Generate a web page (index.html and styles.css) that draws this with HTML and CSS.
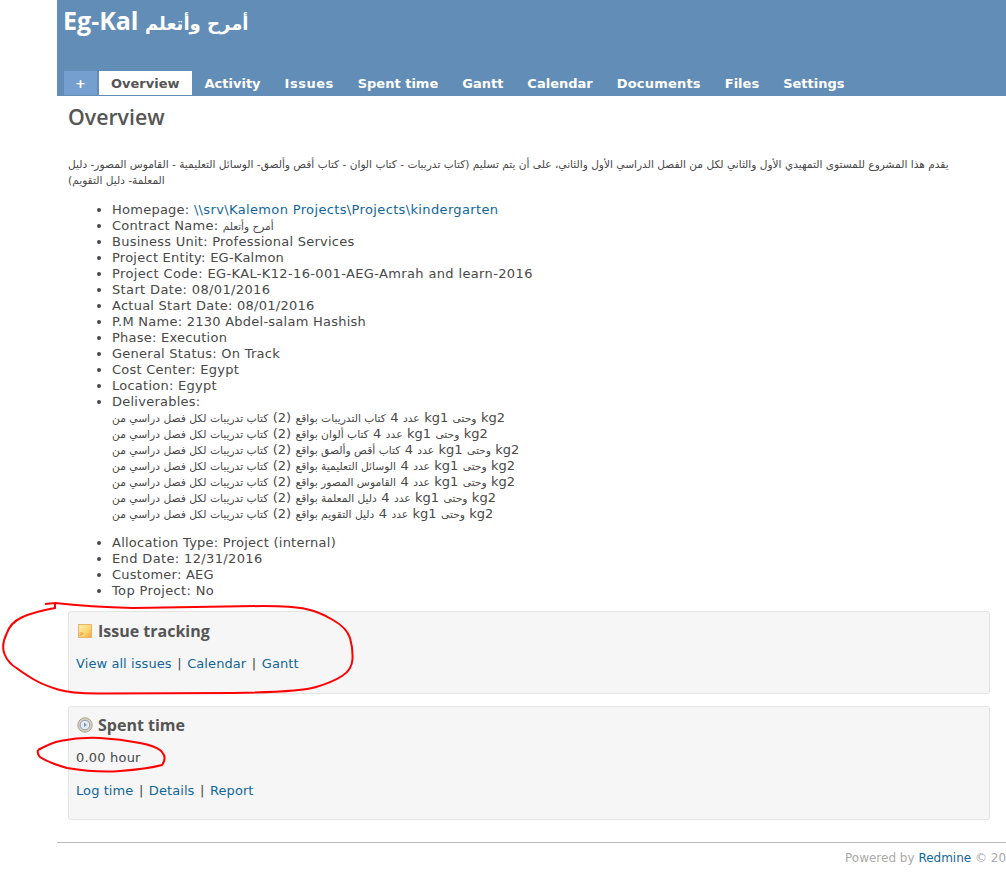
FILE: index.html
```html
<!DOCTYPE html>
<html lang="en">
<head>
<meta charset="utf-8">
<title>Overview - Eg-Kal</title>
<link rel="stylesheet" href="styles.css">
</head>
<body>
<div class="wrapper">
  <header class="header">
    <h1 class="site-title">Eg-Kal <span class="ar-title">أمرح وأتعلم</span></h1>
    <nav class="tabs">
      <a class="tab tab-new" href="#">+</a>
      <a class="tab tab-selected" href="#">Overview</a>
      <a class="tab" href="#">Activity</a>
      <a class="tab tab-issues" href="#">Issues</a>
      <a class="tab" href="#">Spent time</a>
      <a class="tab" href="#">Gantt</a>
      <a class="tab" href="#">Calendar</a>
      <a class="tab tab-docs" href="#">Documents</a>
      <a class="tab" href="#">Files</a>
      <a class="tab" href="#">Settings</a>
    </nav>
  </header>
  <main class="content">
    <h2 class="page-title">Overview</h2>
    <p class="description" dir="rtl">يقدم هذا المشروع للمستوى التمهيدي الأول والثاني لكل من الفصل الدراسي الأول والثاني، على أن يتم تسليم (كتاب تدريبات - كتاب الوان - كتاب أقص وألصق- الوسائل التعليمية - القاموس المصور- دليل المعلمة- دليل التقويم)</p>
    <ul class="fields">
      <li>Homepage: <a class="wide" href="#">\\srv\Kalemon Projects\Projects\kindergarten</a></li>
      <li>Contract Name: <span class="ar">أمرح وأتعلم</span></li>
      <li>Business Unit: Professional Services</li>
      <li>Project Entity: EG-Kalmon</li>
      <li class="wide">Project Code: EG-KAL-K12-16-001-AEG-Amrah and learn-2016</li>
      <li class="wide">Start Date: 08/01/2016</li>
      <li>Actual Start Date: 08/01/2016</li>
      <li>P.M Name: 2130 Abdel-salam Hashish</li>
      <li>Phase: Execution</li>
      <li>General Status: On Track</li>
      <li>Cost Center: Egypt</li>
      <li>Location: Egypt</li>
      <li>Deliverables:
        <div class="deliverables">
          <div class="deliverable" dir="rtl"><span class="lat">kg2</span> وحتى <span class="lat">kg1</span> عدد <span class="lat">4</span> كتاب التدريبات بواقع <span class="lat">(2)</span> كتاب تدريبات لكل فصل دراسي من</div>
          <div class="deliverable" dir="rtl"><span class="lat">kg2</span> وحتى <span class="lat">kg1</span> عدد <span class="lat">4</span> كتاب ألوان بواقع <span class="lat">(2)</span> كتاب تدريبات لكل فصل دراسي من</div>
          <div class="deliverable" dir="rtl"><span class="lat">kg2</span> وحتى <span class="lat">kg1</span> عدد <span class="lat">4</span> كتاب أقص وألصق بواقع <span class="lat">(2)</span> كتاب تدريبات لكل فصل دراسي من</div>
          <div class="deliverable" dir="rtl"><span class="lat">kg2</span> وحتى <span class="lat">kg1</span> عدد <span class="lat">4</span> الوسائل التعليمية بواقع <span class="lat">(2)</span> كتاب تدريبات لكل فصل دراسي من</div>
          <div class="deliverable" dir="rtl"><span class="lat">kg2</span> وحتى <span class="lat">kg1</span> عدد <span class="lat">4</span> القاموس المصور بواقع <span class="lat">(2)</span> كتاب تدريبات لكل فصل دراسي من</div>
          <div class="deliverable" dir="rtl"><span class="lat">kg2</span> وحتى <span class="lat">kg1</span> عدد <span class="lat">4</span> دليل المعلمة بواقع <span class="lat">(2)</span> كتاب تدريبات لكل فصل دراسي من</div>
          <div class="deliverable" dir="rtl"><span class="lat">kg2</span> وحتى <span class="lat">kg1</span> عدد <span class="lat">4</span> دليل التقويم بواقع <span class="lat">(2)</span> كتاب تدريبات لكل فصل دراسي من</div>
        </div>
      </li>
      <li>Allocation Type: Project (internal)</li>
      <li class="wide">End Date: 12/31/2016</li>
      <li>Customer: AEG</li>
      <li class="wide">Top Project: No</li>
    </ul>
    <section class="box box-issues">
      <h3 class="box-title">
        <svg class="box-icon" width="16" height="16" viewBox="0 0 16 16" aria-hidden="true">
          <defs><linearGradient id="ticket" x1="0" y1="0" x2="1" y2="1"><stop offset="0" stop-color="#fff0b0"/><stop offset="0.6" stop-color="#fbd56f"/><stop offset="1" stop-color="#ee9f3c"/></linearGradient></defs>
          <rect x="1.500" y="1.500" width="13" height="13" fill="url(#ticket)" stroke="#f0b468"/>
          <path d="M2.500 12.500l4-2M2.500 10h3" stroke="#e8983c" fill="none"/>
        </svg>
        Issue tracking
      </h3>
      <p class="box-links"><a href="#">View all issues</a><span class="sep">|</span><a href="#">Calendar</a><span class="sep">|</span><a href="#">Gantt</a></p>
    </section>
    <section class="box box-time">
      <h3 class="box-title">
        <svg class="box-icon" width="16" height="16" viewBox="0 0 16 16" aria-hidden="true">
          <circle cx="8" cy="8" r="7.200" fill="#d9cfba" stroke="#b0a48f"/>
          <circle cx="8" cy="8" r="4.800" fill="#e4ecf6" stroke="#8ea3bc"/>
          <path d="M7 5.500l3 2.500-3 2z" fill="#7f93ad"/>
        </svg>
        Spent time
      </h3>
      <p class="box-hours">0.00 hour</p>
      <p class="box-links"><a href="#">Log time</a><span class="sep">|</span><a href="#">Details</a><span class="sep">|</span><a href="#">Report</a></p>
    </section>
  </main>
  <footer class="footer">Powered by <a href="#">Redmine</a> © 20</footer>
</div>
<svg class="annotations" width="1006" height="880" viewBox="0 0 1006 880" aria-hidden="true">
  <path d="M45 604L55 603L55 608Q33 612 21.500 617.500Q10 623 6.500 634Q1 645 4.500 654Q8 663 16.500 668Q23 673 33 679Q43 685 58 689.500Q73 694 103 693.500L233 693Q300 692 316 687Q333 682 342 676Q352 670 352.500 659Q353 648 350 638Q347 628 333 620Q320 612 306 609Q293 606 263 606L133 608Q90 607 55 603"/>
  <path d="M38 750Q53 742 60 741Q80 737 100 738Q120 739 140 743Q155 746 160 750Q168 757 162 765Q147 769 120 771Q97 773 67 768Q47 762 40 757Q37 754 38 750"/>
</svg>
</body>
</html>
```
FILE: styles.css
```css
html, body { margin: 0; padding: 0; }
body {
  position: relative;
  height: 880px;
  overflow: hidden;
  padding-left: 57px;
  background: #fff;
  color: #484848;
  font-family: "DejaVu Sans", sans-serif;
  font-size: 13px;
  line-height: 16px;
}
a { color: #169; text-decoration: none; }
.wrapper { width: 949px; }
.header {
  height: 96px;
  background: #628db6;
  color: #fff;
  display: flex;
  flex-direction: column;
  justify-content: space-between;
  padding-left: 7px;
  box-sizing: border-box;
}
.site-title {
  margin: 0 0 0 -1px;
  padding-top: 6px;
  font-family: "Open Sans", sans-serif;
  font-size: 25px;
  line-height: 28px;
  font-weight: 700;
  white-space: nowrap;
}
.ar-title { font-family: "DejaVu Sans", sans-serif; font-size: 18px; }
.tabs { display: flex; gap: 2px; align-items: flex-end; padding-bottom: 1px; }
.tab {
  display: block;
  padding: 0 11px;
  height: 24px;
  line-height: 25px;
  color: #fff;
  font-weight: 700;
  font-size: 13px;
}
.tab-new { background: #759fcf; width: 33px; padding: 0; text-align: center; box-sizing: border-box; }
.tab-selected { background: #fff; color: #555; padding: 0 12px; }
.tab-issues { letter-spacing: 0.5px; }
.tab-docs { letter-spacing: 0.2px; }
.content { padding: 9px 16px 0 11px; height: 746px; box-sizing: border-box; }
.page-title {
  margin: 0;
  font-family: "Open Sans", sans-serif;
  font-size: 21.3px;
  line-height: 24px;
  font-weight: 600;
  color: #555;
}
.description {
  margin: 27px 0 0;
  width: 884px;
  text-align: left;
  font-size: 10.6px;
  line-height: 16px;
}
.fields { margin: 14px 0 0; padding-left: 44px; letter-spacing: 0.25px; }
.wide { letter-spacing: 0.36px; }
.ar { font-size: 10.5px; letter-spacing: 0; }
.deliverables { margin-bottom: 13px; letter-spacing: 0; }
.deliverable { width: max-content; height: 16px; font-size: 10.7px; }
.lat { font-size: 13px; margin: 0 1px; }
.box {
  margin-bottom: 12px;
  background: #f6f6f6;
  border: 1px solid #e4e4e4;
  border-radius: 3px;
  padding: 7px 7px 8px;
  box-sizing: border-box;
}
.box-issues { height: 83px; margin-top: 12px; }
.box-time { height: 114px; padding-top: 6px; }
.box-title {
  display: flex;
  align-items: center;
  gap: 5px;
  margin: 0;
  padding-left: 1px;
  font-family: "Open Sans", sans-serif;
  font-size: 16px;
  line-height: 24px;
  font-weight: 700;
  color: #555;
}
.box-icon { flex: none; }
.box-links, .box-hours { margin: 13px 0 0; letter-spacing: 0.08px; }
.box-hours { margin-top: 13px; letter-spacing: 0.2px; }
.box-hours + .box-links { margin-top: 17px; }
.sep { margin: 0 5.5px; }
.footer {
  border-top: 1px solid #bbb;
  padding: 7px 0 0 788px;
  color: #aaa;
  font-size: 12px;
  white-space: nowrap;
}
.annotations { position: absolute; left: 0; top: 0; pointer-events: none; }
.annotations path { fill: none; stroke: #f00; stroke-width: 2; }
```
